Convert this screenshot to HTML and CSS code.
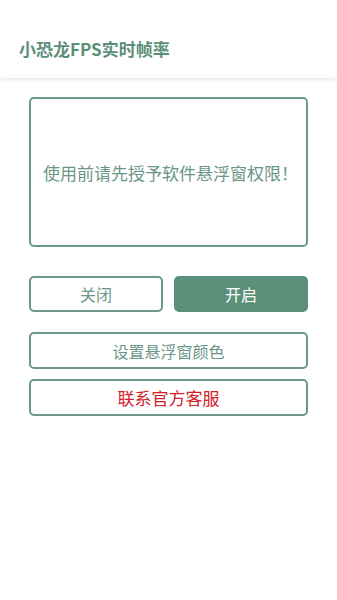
FILE: index.html
```html
<!DOCTYPE html>
<html lang="zh-CN">
<head>
<meta charset="utf-8">
<link rel="stylesheet" href="styles.css">
</head>
<body>
<header class="appbar">
  <h1 class="title">小恐龙FPS实时帧率</h1>
</header>
<main class="content">
  <div class="notice">使用前请先授予软件悬浮窗权限！</div>
  <div class="row">
    <button class="btn btn-outline">关闭</button>
    <button class="btn btn-fill">开启</button>
  </div>
  <button class="btn btn-outline btn-wide btn-color">设置悬浮窗颜色</button>
  <button class="btn btn-outline btn-wide btn-contact">联系官方客服</button>
</main>
</body>
</html>
```
FILE: styles.css
```css
* { box-sizing: border-box; }
html, body { margin: 0; padding: 0; background: #fff; }
body {
  width: 337px;
  height: 600px;
  font-family: "Noto Sans CJK SC", "Noto Sans", sans-serif;
  color: #6b9585;
}
.appbar {
  height: 78px;
  padding: 38px 19px 0;
  background: #fff;
  box-shadow: 0 1px 4px rgba(0,0,0,0.12);
  position: relative;
}
.title {
  margin: 0;
  font-size: 17px;
  line-height: 22px;
  font-weight: bold;
  color: #5b8f7a;
}
.content {
  padding: 19px 29px 0;
  display: flex;
  flex-direction: column;
}
.notice {
  height: 150px;
  border: 2px solid #6b9a89;
  border-radius: 5px;
  display: flex;
  align-items: center;
  justify-content: center;
  font-size: 17px;
  color: #6b9585;
  padding-left: 4px;
}
.row {
  margin-top: 29px;
  display: flex;
  gap: 11px;
}
.btn {
  font-family: inherit;
  font-size: 16px;
  height: 36px;
  border-radius: 5px;
  padding: 0;
  margin: 0;
  cursor: pointer;
}
.row .btn { flex: 1; }
.btn-outline {
  background: #fff;
  border: 2px solid #6b9a89;
  color: #6b9585;
}
.btn-fill {
  background: #5b8f7a;
  border: 2px solid #5b8f7a;
  color: #fff;
}
.btn-wide {
  width: 100%;
  height: 37px;
}
.btn-color { margin-top: 20px; }
.btn-contact {
  margin-top: 10px;
  color: #d42128;
  font-size: 17px;
}
```
